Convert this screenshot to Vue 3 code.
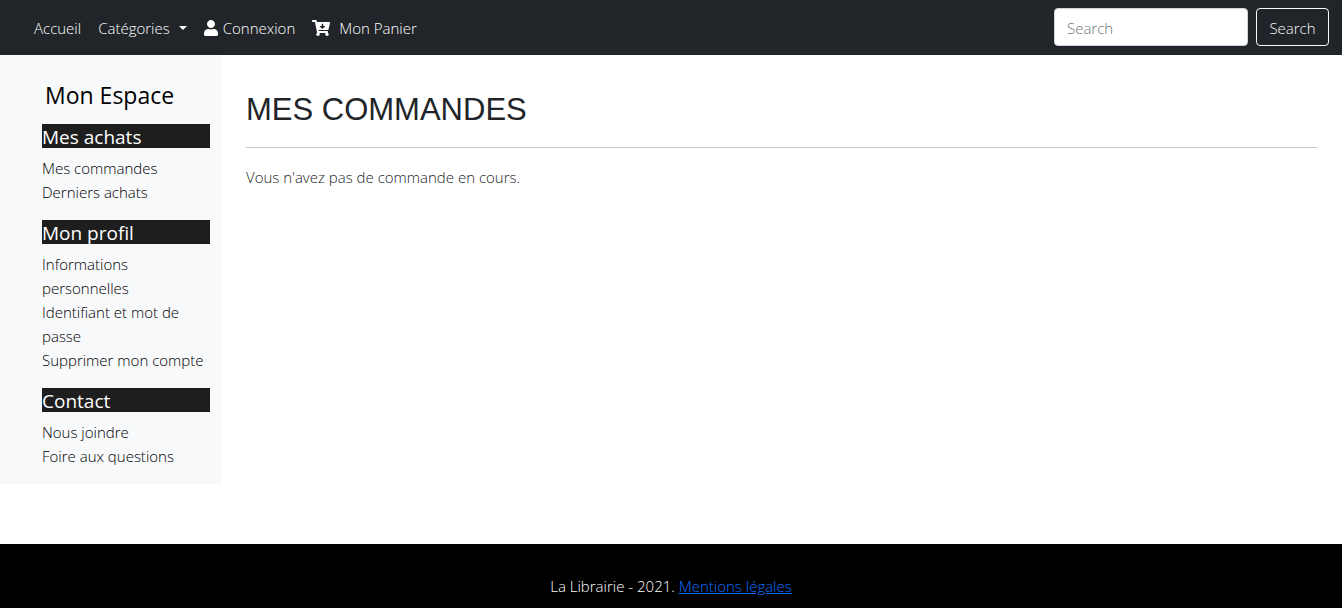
<script setup>
const sections = [
  { title: 'Mes achats', links: ['Mes commandes', 'Derniers achats'] },
  {
    title: 'Mon profil',
    links: ['Informations personnelles', 'Identifiant et mot de passe', 'Supprimer mon compte'],
  },
  { title: 'Contact', links: ['Nous joindre', 'Foire aux questions'] },
]
</script>

<template>
  <div class="page">
    <header class="navbar">
      <nav class="links">
        <a href="#">Accueil</a>
        <a href="#" class="dropdown">Catégories<span class="caret"></span></a>
        <a href="#" class="account">
          <svg width="14" height="16" viewBox="0 0 448 512" aria-hidden="true">
            <path fill="currentColor" d="M224 256c70.7 0 128-57.3 128-128S294.7 0 224 0 96 57.3 96 128s57.3 128 128 128zm89.600 32h-16.700c-22.200 10.200-46.900 16-72.900 16s-50.600-5.800-72.900-16h-16.700C60.200 288 0 348.200 0 422.400V464c0 26.500 21.500 48 48 48h352c26.500 0 48-21.500 48-48v-41.600c0-74.200-60.200-134.400-134.400-134.400z" />
          </svg>
          Connexion
        </a>
        <a href="#" class="cart">
          <svg width="18" height="16" viewBox="0 0 576 512" aria-hidden="true">
            <path fill="currentColor" d="M504.717 320H211.572l6.545 32h268.418c15.401 0 26.816 14.301 23.403 29.319l-5.517 24.276C523.112 414.668 536 433.828 536 456c0 31.202-25.519 56.444-56.824 55.994-29.823-.429-54.350-24.631-55.155-54.447-.440-16.287 6.085-31.049 16.803-41.548H231.176C241.553 426.165 248 440.326 248 456c0 31.813-26.528 57.431-58.670 55.938-28.540-1.325-51.751-24.385-53.251-52.917-1.158-22.034 10.436-41.455 28.051-51.586L93.883 64H24C10.745 64 0 53.255 0 40V24C0 10.745 10.745 0 24 0h102.529c11.401 0 21.228 8.021 23.513 19.190L159.208 64H551.990c15.401 0 26.816 14.301 23.403 29.319l-47.273 208C525.637 312.246 515.923 320 504.717 320zM403.029 192H360v-60c0-6.627-5.373-12-12-12h-24c-6.627 0-12 5.373-12 12v60h-43.029c-10.691 0-16.045 12.926-8.485 20.485l67.029 67.029c4.686 4.686 12.284 4.686 16.971 0l67.029-67.029c7.559-7.559 2.205-20.485-8.486-20.485z" />
          </svg>
          Mon Panier
        </a>
      </nav>
      <form class="search" @submit.prevent>
        <input type="search" placeholder="Search" aria-label="Search" />
        <button type="submit">Search</button>
      </form>
    </header>

    <div class="body">
      <aside class="sidebar">
        <h2>Mon Espace</h2>
        <section v-for="section in sections" :key="section.title">
          <h3>{{ section.title }}</h3>
          <ul>
            <li v-for="link in section.links" :key="link"><a href="#">{{ link }}</a></li>
          </ul>
        </section>
      </aside>
      <main>
        <h1>MES COMMANDES</h1>
        <hr />
        <p>Vous n'avez pas de commande en cours.</p>
      </main>
    </div>

    <footer>
      <p>La Librairie - 2021. <a href="#">Mentions légales</a></p>
    </footer>
  </div>
</template>

<style>
body {
  margin: 0;
  background: #fff;
}
</style>

<style scoped>
* {
  box-sizing: border-box;
}

.page {
  display: flex;
  flex-direction: column;
  min-height: 100vh;
  font: 350 15px/24px "Open Sans", "Noto Sans", sans-serif;
  color: #212529;
}

.navbar {
  display: flex;
  justify-content: space-between;
  align-items: center;
  padding: 8px 13px 9px 34px;
  background: #212529;
}

.links {
  display: flex;
  gap: 17px;
  padding-top: 2px;
}

.links a {
  display: flex;
  align-items: center;
  gap: 5px;
  color: #fff;
  text-decoration: none;
}

.links .dropdown,
.links .cart {
  gap: 9px;
}

.caret {
  border: 4px solid transparent;
  border-top-color: currentColor;
  border-bottom: 0;
}

.search {
  display: flex;
  gap: 8px;
}

.search input,
.search button {
  height: 38px;
  padding: 8px 12px 6px;
  border-radius: 4px;
  font: inherit;
  line-height: 22px;
}

.search input {
  width: 194px;
  border: 1px solid #ced4da;
  background: #fff;
  color: #212529;
  appearance: none;
}

.search input::placeholder {
  color: #6c757d;
  opacity: 1;
}

.search button {
  min-width: 73px;
  border: 1px solid #f8f9fa;
  background: transparent;
  color: #f8f9fa;
}

.body {
  display: flex;
  align-items: flex-start;
  margin-bottom: 60px;
}

.sidebar {
  flex: 0 0 222px;
  padding: 25px 12px 0 42px;
  background: #f8f9fb;
  color: #000;
}

h1,
h2,
h3,
p,
ul {
  margin: 0;
  padding: 0;
}

h2 {
  margin-bottom: 14px;
  padding-left: 3px;
  font-size: 23px;
  line-height: 30px;
  font-weight: 400;
}

h3 {
  margin-bottom: 8px;
  padding-top: 2px;
  background: #1e1e1e;
  color: #fff;
  font-size: 19px;
  line-height: 22px;
  font-weight: 400;
}

ul {
  padding-bottom: 16px;
  list-style: none;
}

li a {
  color: inherit;
  text-decoration: none;
}

main {
  flex: 1;
  padding: 36px 25px 0 24px;
}

h1 {
  font: 400 31px/38px "Liberation Sans", Arial, sans-serif;
}

hr {
  height: 1px;
  margin: 18px 0 17px;
  border: 0;
  background: #c8c9ca;
}

footer {
  flex: 1;
  padding-top: 30px;
  background: #000;
  color: #fff;
  text-align: center;
}

footer a {
  color: #0d6efd;
}
</style>
